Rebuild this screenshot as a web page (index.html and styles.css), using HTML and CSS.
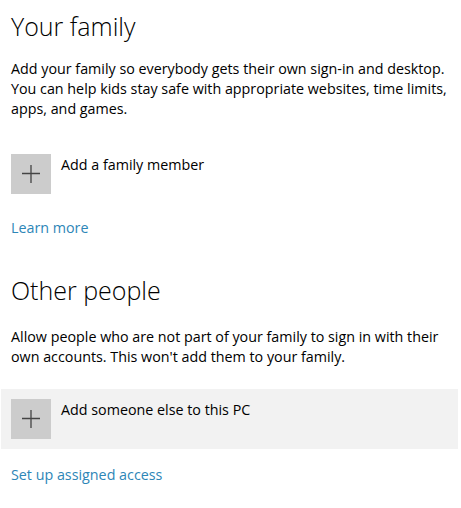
FILE: index.html
```html
<!DOCTYPE html>
<html lang="en">
<head>
<meta charset="UTF-8" />
<title>Family &amp; other people</title>
<link rel="stylesheet" href="styles.css">
</head>
<body>

<!-- Your family -->
<div class="group">
  <h2 class="title">Your family</h2>
  <p class="desc">Add your family so everybody gets their own sign-in and desktop. You can help kids stay safe with appropriate websites, time limits, apps, and games.</p>
  <div class="item">
    <div class="plus-box">
      <svg width="18" height="18" viewBox="0 0 18 18"><path d="M0 8.5H18M9 0V18" stroke="#444" stroke-width="1.3" fill="none"/></svg>
    </div>
    <span class="item-label">Add a family member</span>
  </div>
  <a class="link" href="#">Learn more</a>
</div>

<!-- Other people -->
<div class="group second">
  <h2 class="title">Other people</h2>
  <p class="desc">Allow people who are not part of your family to sign in with their own accounts. This won't add them to your family.</p>
  <div class="item hovered">
    <div class="plus-box">
      <svg width="18" height="18" viewBox="0 0 18 18"><path d="M0 8.5H18M9 0V18" stroke="#444" stroke-width="1.3" fill="none"/></svg>
    </div>
    <span class="item-label">Add someone else to this PC</span>
  </div>
  <a class="link" href="#">Set up assigned access</a>
</div>

</body>
</html>
```

FILE: styles.css
```css
body, html {
  margin: 0; padding: 0;
  background: #fff;
  font-family: 'Open Sans', 'Noto Sans', sans-serif;
  color: #000;
}
.group {
  display: flex;
  flex-direction: column;
  align-items: flex-start;
}
.second {
  margin-top: 30px;
}
.title {
  font-size: 25px;
  font-weight: 300;
  line-height: 32px;
  margin: 10px 11px 0;
}
.second .title {
  margin-top: 6px;
}
.desc {
  font-size: 14.3px;
  line-height: 20px;
  margin: 17px 11px 0;
  width: 445px;
}
.second .desc {
  margin-top: 21px;
}
.item {
  display: flex;
  align-items: flex-start;
  gap: 10px;
  margin-top: 35px;
  padding: 0 11px;
}
.item.hovered {
  align-self: stretch;
  margin: 22px 3px 0 1px;
  padding: 10px 10px;
  background: #f2f2f2;
}
.plus-box {
  width: 40px;
  height: 40px;
  background: #cccccc;
  display: flex;
  align-items: center;
  justify-content: center;
}
.item-label {
  font-size: 14.3px;
  line-height: 20px;
  margin-top: 1px;
}
.link {
  font-size: 14.3px;
  line-height: 20px;
  color: #2d86b7;
  text-decoration: none;
  margin: 24px 11px 0;
}
.item.hovered + .link {
  margin-top: 16px;
}
```
